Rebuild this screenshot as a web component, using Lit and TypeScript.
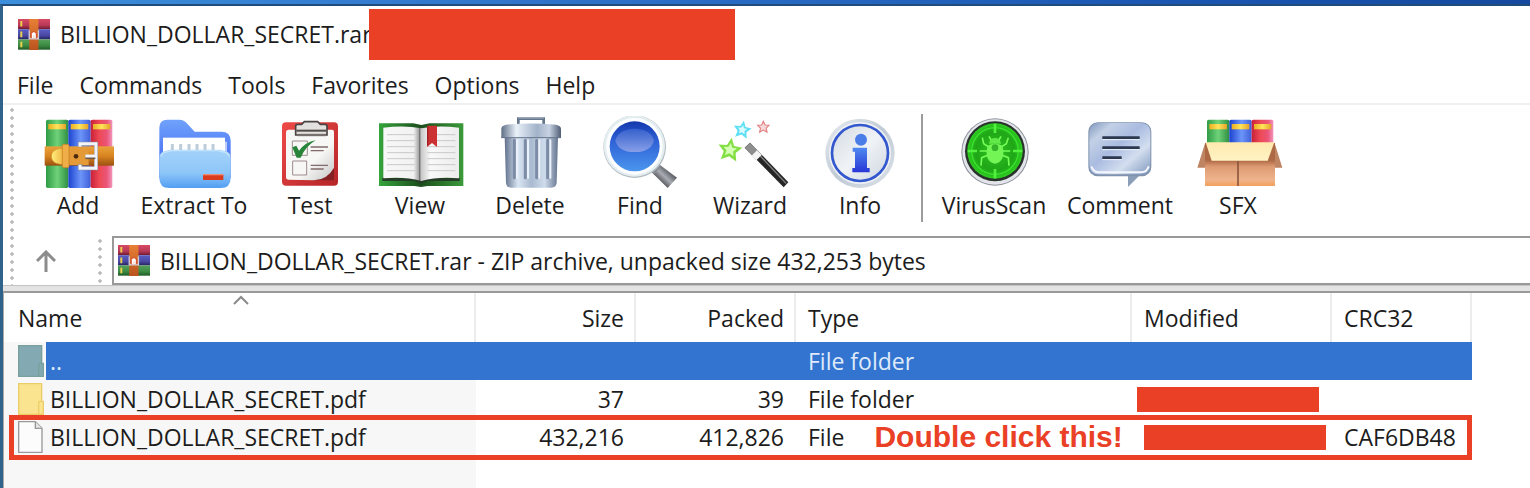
import { LitElement, html, css, svg } from "lit";
import { customElement, state } from "lit/decorators.js";

const books = svg`
  <svg class="small" viewBox="0 0 97 94" width="32" height="31" aria-hidden="true">
    <defs>
      <linearGradient id="r" x1="0" y1="0" x2="0" y2="1"><stop offset="0" stop-color="#d84a63"/><stop offset=".6" stop-color="#b83a58"/><stop offset="1" stop-color="#6e1a30"/></linearGradient>
      <linearGradient id="b" x1="0" y1="0" x2="0" y2="1"><stop offset="0" stop-color="#5a5ec4"/><stop offset=".6" stop-color="#4a48a4"/><stop offset="1" stop-color="#26245e"/></linearGradient>
      <linearGradient id="g" x1="0" y1="0" x2="0" y2="1"><stop offset="0" stop-color="#55a25c"/><stop offset=".6" stop-color="#3c8a42"/><stop offset="1" stop-color="#1d5a24"/></linearGradient>
      <linearGradient id="o" x1="0" y1="0" x2="0" y2="1"><stop offset="0" stop-color="#e87f36"/><stop offset="1" stop-color="#b9541f"/></linearGradient>
    </defs>
    <rect width="97" height="31" fill="url(#r)"/><rect y="31" width="97" height="31" fill="url(#b)"/><rect y="62" width="97" height="31" fill="url(#g)"/>
    <path d="M7 6h6v17H7zM7 38h6v17H7zM7 69h6v17H7z" fill="#e9cf4a"/>
    <rect x="34" width="28" height="94" fill="url(#o)"/>
    <path d="M32 36l4-3v24h24V33l4 3v26H32z" fill="#d3cdd8"/>
    <path d="M38 58V42q10-10 20 0v16z" fill="#d8542e"/><path d="M42 58V44q6-8 12 0v14z" fill="#fff"/><path d="M46 50h4v8h-4z" fill="#f3d9d0"/>
  </svg>`;

const bookTops = (h: number) => svg`
  <defs>
    <linearGradient id="bg"><stop offset="0" stop-color="#2f9b45"/><stop offset=".5" stop-color="#6fd279"/><stop offset="1" stop-color="#2f8e42"/></linearGradient>
    <linearGradient id="bb"><stop offset="0" stop-color="#1b42cf"/><stop offset=".55" stop-color="#6c95fa"/><stop offset="1" stop-color="#3f5fd8"/></linearGradient>
    <linearGradient id="br"><stop offset="0" stop-color="#c9203a"/><stop offset=".4" stop-color="#ee4a55"/><stop offset=".75" stop-color="#ea5578"/><stop offset="1" stop-color="#f295bb"/></linearGradient>
    <linearGradient id="gold"><stop offset="0" stop-color="#eaae22"/><stop offset=".5" stop-color="#ffe55a"/><stop offset="1" stop-color="#e3a32a"/></linearGradient>
  </defs>
  <rect y="0" width="67" height=${h} rx="5" fill="url(#bg)"/><rect x="67" width="67" height=${h} rx="5" fill="url(#bb)"/><rect x="134" width="65" height=${h} rx="5" fill="url(#br)"/>
  <rect x="7" y="13" width="53" height="16" fill="url(#gold)"/><rect x="74" y="13" width="53" height="16" fill="url(#gold)"/><rect x="141" y="13" width="52" height="16" fill="url(#gold)"/>`;

const STAR = "M0-20L6-7 20-6 10 4 13 18 0 11-13 18-10 4-20-6-6-7Z";

const tools = [
  { label: "Add", size: "", view: "84 33 300 222", art: svg`
    <defs><linearGradient id="belt" x1="0" y1="0" x2="0" y2="1"><stop offset="0" stop-color="#e9a33a"/><stop offset=".5" stop-color="#d98420"/><stop offset="1" stop-color="#9a5110"/></linearGradient>
    <linearGradient id="tongue"><stop offset="0" stop-color="#fff07d"/><stop offset="1" stop-color="#e89a2c"/></linearGradient></defs>
    <g transform="translate(138 44)">${bookTops(205)}</g>
    <rect x="134" y="124" width="208" height="58" fill="url(#belt)"/>
    <path d="M206 130h-26q-26 4-26 24t26 24h26z" fill="url(#tongue)" stroke="#d08b22" stroke-width="2"/>
    <path d="M206 126h60v54h-60z" fill="#e59a38"/>
    <rect x="187" y="118" width="20" height="70" rx="4" fill="#efae48" stroke="#c17a1e" stroke-width="2"/>
    <circle cx="228" cy="154" r="7" fill="#4b2a10"/>
    <path d="M240 126v-10h48v74h-48v-12" fill="none" stroke="#868b96" stroke-width="12"/>
    <path d="M240 125v-9h48v74h-48v-11" fill="none" stroke="#f2f4f7" stroke-width="9"/>
    <path d="M256 156h30" stroke="#6d5a4d" stroke-width="13"/><path d="M256 153h32" stroke="#f4f5f8" stroke-width="9"/>` },
  { label: "Extract To", size: "wide", view: "435 33 300 222", art: svg`
    <defs><linearGradient id="fb" x1="0" y1="0" x2="0" y2="1"><stop offset="0" stop-color="#6fa2fb"/><stop offset="1" stop-color="#3c5df0"/></linearGradient>
    <linearGradient id="ff" x1="0" y1="0" x2="0" y2="1"><stop offset="0" stop-color="#a3d2fa"/><stop offset=".6" stop-color="#8ec6f8"/><stop offset="1" stop-color="#529ef3"/></linearGradient></defs>
    <path d="M481 220V68q0-24 24-24h36q14 0 24 12l22 24h80q28 0 28 28v112z" fill="url(#fb)"/>
    <rect x="492" y="98" width="186" height="80" fill="#fff"/>
    <path d="M520 117v30M545 117v30M570 117v30M594 117v30M618 117v30M642 117v30" stroke="#bfcdd8" stroke-width="9"/>
    <path d="M681 110v34" stroke="#d2dcf8" stroke-width="5"/>
    <path d="M481 160q0-20 18-22l16-4h146l20 5q14 4 14 20v60q0 30-30 30H511q-30 0-30-30z" fill="url(#ff)"/>
    <path d="M486 154q4-12 20-14l12-3h140l16 4q14 3 17 14" fill="none" stroke="#c2e3fc" stroke-width="4"/>
    <rect x="612" y="208" width="61" height="17" rx="2" fill="#d93b1c"/><path d="M612 209h61" stroke="#f08b74" stroke-width="4"/>` },
  { label: "Test", size: "", view: "6 33 300 222", art: svg`
    <defs><linearGradient id="pad" x1="0" y1="0" x2="1" y2="1"><stop offset="0" stop-color="#ee4a48"/><stop offset="1" stop-color="#b52528"/></linearGradient>
    <linearGradient id="paper" x1="0" y1="0" x2="1" y2="1"><stop offset=".6" stop-color="#f7f7f6"/><stop offset="1" stop-color="#c4c4c4"/></linearGradient></defs>
    <rect x="72" y="52" width="168" height="190" rx="12" fill="url(#pad)"/>
    <path d="M228 190v36H160z" fill="#852023"/>
    <path d="M92 74h130q6 0 6 6v108q-20 36-60 38l-76-2q-8 0-8-8V82q0-8 8-8z" fill="url(#paper)"/>
    <path d="M113 90V64q0-6 6-6h12l8-8h40l8 8h14q6 0 6 6v26z" fill="#e3e1df" stroke="#4a4443" stroke-width="5"/>
    <path d="M115 77h90" stroke="#514b49" stroke-width="6"/><path d="M118 90h86" stroke="#766f6d" stroke-width="7"/>
    <path d="M103 108h45v43h-45zM104 168h42v42h-42z" fill="none" stroke="#9d8d8b" stroke-width="3"/>
    <path d="M158 126h52M158 137h39M158 181h52M158 192h39" stroke="#826a6a" stroke-width="4"/>
    <path d="M103 127l12-5 8 15q20-26 50-31-30 17-45 52h-12z" fill="#278438"/>` },
  { label: "View", size: "", view: "333 33 300 222", art: svg`
    <defs><linearGradient id="cov"><stop offset="0" stop-color="#35a43b"/><stop offset=".5" stop-color="#1b4d1c"/><stop offset="1" stop-color="#3b9b3a"/></linearGradient>
    <linearGradient id="pg"><stop offset="0" stop-color="#f8f8f8"/><stop offset=".4" stop-color="#f1f1f1"/><stop offset=".47" stop-color="#a5a5a5"/><stop offset=".48" stop-color="#6b6b6b"/><stop offset=".5" stop-color="#c8c8c8"/><stop offset=".62" stop-color="#f9f9f9"/><stop offset="1" stop-color="#ececec"/></linearGradient></defs>
    <path d="M360 55h103l24 5 25-5h101v188H506l-20 3-20-3H360z" fill="url(#cov)"/>
    <path d="M370 218h232v10H504l-18 8-18-8H370z" fill="#263d27"/>
    <path d="M373 68q64-8 114 2 50-10 113-2v152q-63-6-113 8-50-14-114-8z" fill="url(#pg)"/>
    <path d="M384 89h84M384 107h84M384 125h84M384 143h84M384 161h84M384 179h84M384 197h84M505 89h84M505 107h84M505 125h84M505 143h84M505 161h84M505 179h84M505 197h84" stroke="#c9c9c9" stroke-width="3"/>
    <path d="M504 62h30v64l-15-12-15 12z" fill="#cc3134"/><path d="M506 63v58" stroke="#9f1f24" stroke-width="4"/>` },
  { label: "Delete", size: "", view: "3 33 300 222", art: svg`
    <defs><linearGradient id="can"><stop offset="0" stop-color="#60708c"/><stop offset=".25" stop-color="#d9e5f2"/><stop offset=".5" stop-color="#a9bad0"/><stop offset=".75" stop-color="#cfdcec"/><stop offset="1" stop-color="#65758f"/></linearGradient>
    <linearGradient id="lid"><stop offset="0" stop-color="#5f6e86"/><stop offset=".25" stop-color="#e9f1f9"/><stop offset=".6" stop-color="#a2b2c8"/><stop offset=".8" stop-color="#c8d4e4"/><stop offset="1" stop-color="#4f5d75"/></linearGradient></defs>
    <path d="M118 58V41h76v17" fill="none" stroke="#64748b" stroke-width="8"/><path d="M118 39h76" stroke="#a7b6c8" stroke-width="3"/>
    <path d="M77 96h160l-4 138q-2 14-16 14H96q-13 0-15-14z" fill="url(#can)"/>
    <path d="M106 106v112M139 106v112M173 106v112M206 106v112" stroke="#7d8ca6" stroke-width="9" stroke-linecap="round"/>
    <path d="M114 106v112M147 106v112M181 106v112M214 106v112" stroke="#eaf1f9" stroke-width="6" stroke-linecap="round"/>
    <path d="M67 99V72q0-10 14-13 76-7 150 0 15 3 15 13v27z" fill="url(#lid)"/><path d="M67 98h178" stroke="#66748c" stroke-width="3"/>` },
  { label: "Find", size: "", view: "333 33 300 222", art: svg`
    <defs><linearGradient id="lens" x1="0" y1="0" x2="0" y2="1"><stop offset="0" stop-color="#1438ae"/><stop offset=".4" stop-color="#2f62d6"/><stop offset="1" stop-color="#4b96ee"/></linearGradient>
    <linearGradient id="hl" x1="0" y1="0" x2="0" y2="1"><stop offset="0" stop-color="#3560cc"/><stop offset="1" stop-color="#879fe8"/></linearGradient>
    <linearGradient id="hd" x1="0" y1="1" x2="1" y2="0"><stop offset=".2" stop-color="#2b2c30"/><stop offset=".5" stop-color="#aaacb3"/><stop offset=".8" stop-color="#36383e"/></linearGradient></defs>
    <path d="M518 202l22-24 54 40-28 31z" fill="url(#hd)"/>
    <path d="M516 196l18-20 12 8-21 24z" fill="#888c94"/>
    <circle cx="467" cy="125" r="94" fill="#b3bdc2"/><circle cx="466" cy="123" r="92" fill="#e4edf0"/><circle cx="466" cy="124" r="85" fill="#fbfdfe"/>
    <circle cx="467" cy="124" r="75" fill="url(#lens)"/><path d="M409 107q8-34 58-36 50 2 58 36-10 34-58 34t-58-34z" fill="url(#hl)"/>` },
  { label: "Wizard", size: "", view: "3 33 300 222", art: svg`
    <path d="M153 113l115 119-14 15-117-119z" fill="#262626"/><path d="M153 120l108 115" stroke="#848484" stroke-width="4"/>
    <path d="M153 113l34 35-16 17-34-37z" fill="#8e8e8e"/><path d="M174 136l14 14-16 16-14-14z" fill="#f4f4f4"/>
    <path d=${STAR} transform="translate(93 134) scale(1.8) rotate(8)" fill="#84df45"/><path d=${STAR} transform="translate(93 134) rotate(8)" fill="#d5ffb5"/>
    <path d=${STAR} transform="translate(130 74) scale(1.35) rotate(10)" fill="#5fdff4"/><path d=${STAR} transform="translate(130 74) scale(.7) rotate(10)" fill="#d9faff"/>
    <path d=${STAR} transform="translate(193 66) scale(.85)" fill="#f9dada" stroke="#e27d80" stroke-width="4"/>` },
  { label: "Info", size: "", view: "333 33 300 222", art: svg`
    <defs><linearGradient id="ring" x1="0" y1="0" x2="1" y2="1"><stop offset="0" stop-color="#e9edf1"/><stop offset=".5" stop-color="#c0cad5"/><stop offset="1" stop-color="#dde3ea"/></linearGradient>
    <linearGradient id="disc" x1="0" y1="0" x2="1" y2="1"><stop offset="0" stop-color="#d3dae2"/><stop offset=".5" stop-color="#f0f3f6"/><stop offset="1" stop-color="#ccd5df"/></linearGradient>
    <linearGradient id="ink" x1="0" y1="0" x2="0" y2="1"><stop offset="0" stop-color="#5089f0"/><stop offset="1" stop-color="#2836d6"/></linearGradient></defs>
    <circle cx="483" cy="145" r="104" fill="url(#ring)"/><circle cx="483" cy="144" r="93" fill="#eef2f5"/>
    <circle cx="483" cy="144" r="84" fill="url(#disc)" stroke="#3458cd" stroke-width="8"/>
    <circle cx="486" cy="104" r="18" fill="#4b7de9"/><path d="M461 128h43v61h8v13h-52v-13h8v-49h-7z" fill="url(#ink)"/>` },
  { label: "VirusScan", size: "wider", view: "45 33 300 222", art: svg`
    <defs><radialGradient id="scan"><stop offset="0" stop-color="#2fc321"/><stop offset=".7" stop-color="#1fa617"/><stop offset="1" stop-color="#2fce22"/></radialGradient></defs>
    <circle cx="198" cy="141" r="101" fill="#8c9099"/><circle cx="198" cy="141" r="98" fill="#e3e5ea"/><circle cx="198" cy="139" r="90" fill="#29332b"/>
    <circle cx="198" cy="138" r="83" fill="url(#scan)"/><circle cx="198" cy="138" r="70" fill="none" stroke="#3ce32f" stroke-width="4"/>
    <path d="M198 56v28M198 192v28M116 138h28M252 138h28" stroke="#54f03f" stroke-width="8"/>
    <g fill="none" stroke="#75fb55" stroke-width="5"><path d="M182 128l-18-12-4-18M214 128l18-12 6-18M178 138h-26M218 138h26M178 150l-20 8-2 24M218 150l20 8 2 24M188 108l-8-14M208 108l8-14"/></g>
    <path d="M180 116q3-17 18-17t18 17z" fill="#61e949"/><path d="M176 122q22-12 44 0 12 46-22 54-34-8-22-54z" fill="#74f556"/><circle cx="198" cy="128" r="10" fill="#35b329"/>` },
  { label: "Comment", size: "wider", view: "426 33 300 222", art: svg`
    <defs><linearGradient id="bub" x1="0" y1="0" x2="1" y2="1"><stop offset="0" stop-color="#8098bc"/><stop offset=".2" stop-color="#c3d0e6"/><stop offset=".45" stop-color="#a9bbe0"/><stop offset=".7" stop-color="#d3deef"/><stop offset="1" stop-color="#7f98bd"/></linearGradient></defs>
    <path d="M600 210h36l-36 36z" fill="#8c9fb8"/><rect x="481" y="52" width="189" height="162" rx="28" fill="#7f93ae"/>
    <rect x="484" y="54" width="183" height="154" rx="26" fill="url(#bub)"/>
    <path d="M490 184q6 18 24 18h124q20 0 24-18" fill="none" stroke="#f3f7fd" stroke-width="6"/>
    <path d="M523 98h112M523 128h112M523 158h58" stroke="#2c3950" stroke-width="8"/><path d="M523 104h112M523 134h112M523 164h58" stroke="#edf3fb" stroke-width="3"/>` },
  { label: "SFX", size: "", view: "783 33 300 222", art: svg`
    <defs><linearGradient id="box" x1="0" y1="0" x2="0" y2="1"><stop offset=".4" stop-color="#ad6844"/><stop offset=".55" stop-color="#dc9a72"/><stop offset=".85" stop-color="#efb48c"/><stop offset="1" stop-color="#f4a05c"/></linearGradient>
    <linearGradient id="flap" x1="0" y1="0" x2="0" y2="1"><stop offset="0" stop-color="#ffe9ae"/><stop offset="1" stop-color="#fff3c4"/></linearGradient></defs>
    <g transform="translate(840 44)">${bookTops(75)}</g>
    <path d="M835 112l-24 76h24zM1042 112l24 76h-24z" fill="#bf8462"/>
    <rect x="834" y="114" width="210" height="129" fill="url(#box)"/><path d="M933 168v75" stroke="#8e573d" stroke-width="5"/>
    <path d="M836 112h206l-20 55H854z" fill="url(#flap)"/>` },
];

@customElement("app-root")
export class AppRoot extends LitElement {
  @state() private archive = "BILLION_DOLLAR_SECRET.rar";

  static styles = css`
    :host { display: block; font-family: "Open Sans", "Noto Sans", sans-serif; font-size: 23px; line-height: 32px; color: #1c1c1c; }
    * { box-sizing: border-box; }
    button, input { font: inherit; color: inherit; background: none; border: 0; padding: 0; margin: 0; }
    svg { display: block; flex: none; }
    .frame { min-height: 100vh; display: flex; flex-direction: column; background: linear-gradient(90deg, #3c8fdc, #3278cd 30%, #1b57b3 75%, #15499f); padding-top: 4px; overflow: hidden; }
    .window { flex: 1; display: flex; flex-direction: column; background: #fff; border-left: 3px solid #31628c; border-top: 2px solid #1f4c7c; }
    .title { display: flex; align-items: center; height: 58px; padding: 1px 0 3px 15px; gap: 10px; }
    .title h1 { font: inherit; margin: 0; white-space: nowrap; width: 299px; }
    .mask { background: #ea4026; }
    .title .mask { width: 366px; height: 51px; }
    .menu { display: flex; gap: 26px; height: 41px; padding: 5px 14px 0; border-bottom: 2px solid #f0f0f0; }
    .menu button { line-height: 32px; height: 32px; white-space: nowrap; }
    .grip { flex: none; width: 4px; background: radial-gradient(circle at 2px 5px, #b8b8b8 1px, #dcdcdc 2px, transparent 2px) 0 0 / 4px 8px; }
    .bars { display: flex; padding-left: 7px; }
    .rows { flex: 1; min-width: 0; }
    .tools { display: flex; height: 127px; padding: 11px 0 0 9px; }
    .tool { width: 110px; flex: none; display: flex; flex-direction: column; align-items: center; }
    .tool.wide { width: 122px; }
    .tool.wider { width: 126px; }
    .tool span { line-height: 30px; white-space: nowrap; }
    .divider { flex: none; width: 2px; height: 108px; background: #9c9c9c; margin: -2px 8px 0 6px; }
    .path { display: flex; height: 53px; padding-top: 4px; }
    .up { width: 64px; padding-left: 22px; margin-right: 20px; }
    .path .grip { margin-right: 10px; }
    .address { flex: 1; min-width: 0; display: flex; align-items: center; gap: 10px; height: 49px; border: 2px solid #999; border-right: 0; padding-left: 4px; }
    .address input { flex: 1; min-width: 0; height: 32px; outline: 0; }
    .split { height: 6px; background: #e3e3e3; border-top: 1px solid #c4c4c4; }
    .list { flex: 1; border-left: 1px solid #aaa; border-top: 2px solid #999; background: linear-gradient(#f7f7f7, #f7f7f7) 0 0 / 472px 100% no-repeat; }
    table { table-layout: fixed; border-collapse: separate; border-spacing: 0; width: 1468px; }
    th, td { font-weight: 400; text-align: left; padding: 0 0 0 12px; white-space: nowrap; }
    th { height: 49px; background: #fff; border-right: 2px solid #ececec; position: relative; }
    td { height: 38px; }
    th.num { text-align: right; padding: 0 10px 0 0; }
    td.num { text-align: right; padding: 0 12px 0 0; }
    th:first-child, td:first-child { padding-left: 14px; }
    .sort { position: absolute; left: 229px; top: 2px; }
    .name { display: flex; align-items: center; height: 38px; }
    .name svg { margin-right: 2px; }
    .name span { flex: 1; line-height: 38px; padding-left: 4px; }
    .picked { color: #dfeafa; }
    .picked td:not(:first-child), .picked .name span { background: #3374d0; }
    .target { position: relative; }
    .outline { position: absolute; left: 5px; right: 0; top: -3px; height: 45px; border: 5px solid #ea4026; pointer-events: none; }
    .kind { display: flex; align-items: center; gap: 30px; }
    .note { color: #ea4026; font: bold 30px/36px "Liberation Sans", Arial, sans-serif; }
    .date { width: 182px; height: 25px; }
    .early { margin-left: -7px; }
  `;

  private folder(fill: string, edge: string) {
    return html`<svg viewBox="0 0 78 96" width="26" height="32" aria-hidden="true">
      <path d="M2 2h69v92H2z" fill=${fill} stroke=${edge} stroke-width="4"/>
      <path d="M62 94V58q0-3 4-3h10v39z" fill=${fill} stroke=${edge} stroke-width="4"/></svg>`;
  }

  render() {
    return html`
      <div class="frame"><main class="window">
        <header class="title">${books}<h1>${this.archive}</h1><div class="mask"></div></header>
        <nav class="menu">${["File", "Commands", "Tools", "Favorites", "Options", "Help"].map(m => html`<button>${m}</button>`)}</nav>
        <div class="bars">
          <div class="grip"></div>
          <div class="rows">
            <div class="tools">
              ${tools.map(t => html`${t.label === "VirusScan" ? html`<div class="divider"></div>` : ""}
                <button class="tool ${t.size}">
                  <svg viewBox=${t.view} width="100" height="74" aria-hidden="true">${t.art}</svg><span>${t.label}</span>
                </button>`)}
            </div>
            <div class="path">
              <button class="up" aria-label="Up one level"><svg width="20" height="22" viewBox="0 0 20 22"><path d="M10 22V3M1 11l9-9 9 9" fill="none" stroke="#8c8c8c" stroke-width="3"/></svg></button>
              <div class="grip"></div>
              <div class="address">${books}<input aria-label="Archive path" readonly .value=${this.archive + " - ZIP archive, unpacked size 432,253 bytes"}></div>
            </div>
          </div>
        </div>
        <div class="split"></div>
        <section class="list">
          <table>
            <colgroup><col width="472"><col width="160"><col width="160"><col width="336"><col width="200"><col width="140"></colgroup>
            <thead><tr>
              <th>Name<svg class="sort" width="16" height="10" viewBox="0 0 16 10"><path d="M1 9l7-7 7 7" fill="none" stroke="#8a8a8a" stroke-width="2"/></svg></th>
              <th class="num">Size</th><th class="num">Packed</th><th>Type</th><th>Modified</th><th>CRC32</th>
            </tr></thead>
            <tbody>
              <tr class="picked"><td><div class="name">${this.folder("#83aab2", "#78a09c")}<span>..</span></div></td><td></td><td></td><td>File folder</td><td></td><td></td></tr>
              <tr><td><div class="name">${this.folder("#fbe48f", "#ecce68")}<span>BILLION_DOLLAR_SECRET.pdf</span></div></td><td class="num">37</td><td class="num">39</td><td>File folder</td><td><div class="mask date early"></div></td><td></td></tr>
              <tr class="target"><td><div class="name"><svg viewBox="0 0 78 96" width="26" height="32" aria-hidden="true"><path d="M2 2h50l20 20v72H2z" fill="#fcfcfc" stroke="#999" stroke-width="4"/><path d="M52 2v20h20" fill="#e4e4e4" stroke="#999" stroke-width="4"/></svg><span>BILLION_DOLLAR_SECRET.pdf</span></div></td><td class="num">432,216</td><td class="num">412,826</td><td><div class="kind"><span>File</span><strong class="note">Double click this!</strong></div></td><td><div class="mask date"></div></td><td>CAF6DB48<div class="outline"></div></td></tr>
            </tbody>
          </table>
        </section>
      </main></div>`;
  }
}
